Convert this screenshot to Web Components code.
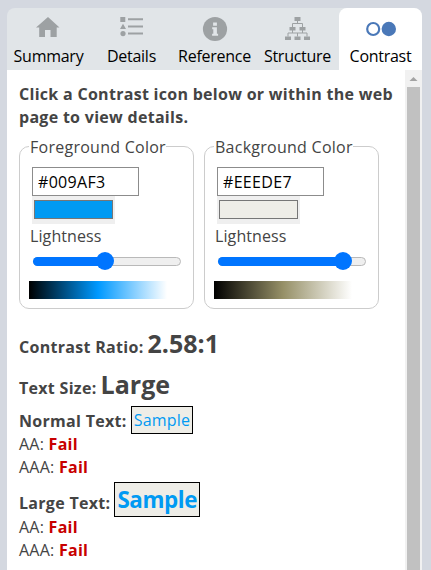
<!DOCTYPE html>
<html lang="en"><head><meta charset="utf-8"><title>Contrast</title>
<style>
html,body{margin:0;height:100%;overflow:hidden;background:#d4d8e0}
body{font:16px/23px "Open Sans","Noto Sans",sans-serif;color:#444}
</style></head><body>
<contrast-sidebar></contrast-sidebar>
<script>
const define=(name,html,update)=>{
  const t=document.createElement('template');t.innerHTML=html;
  customElements.define(name,class extends HTMLElement{
    constructor(){super();this.attachShadow({mode:'open'}).append(t.content.cloneNode(true));}
    connectedCallback(){if(update)update(this,this.shadowRoot);}
  });
};
define('nav-tab',`<style>
:host{display:flex;flex-direction:column;align-items:center;width:83px;height:62px;box-sizing:border-box;color:#000;letter-spacing:-.27px;line-height:24px;white-space:nowrap}
:host([active]){background:#fff;border-radius:8px 8px 0 0}
.icon{height:36px;width:83px}
</style><div class="icon"><slot name="icon"></slot></div><slot></slot>`);

define('color-group',`<style>
:host{display:block;width:175px}
fieldset{box-sizing:border-box;width:175px;height:173.5px;margin:0;border:1px solid #ccc;border-radius:10px;padding:0 0 0 9px;min-width:0}
legend{padding:1px 0 0 1px;height:22px;line-height:23px;white-space:nowrap;letter-spacing:.26px}
.hex{box-sizing:border-box;display:block;width:107px;height:29px;margin:9px 0 0 3px;border:1px solid #8c8c8c;padding:0 5px;font:inherit;letter-spacing:.32px;color:#000;background:#fff;border-radius:0;outline:0}
.pick{box-sizing:border-box;width:83px;height:28px;margin-left:3px;padding:4px 2px;background:#efefef}
.swatch{box-sizing:border-box;height:19px;border:1px solid #767676;background:var(--c)}
.label{height:25px;line-height:25px;padding-left:1px;letter-spacing:.1px}
.range{display:grid;width:148px;height:18px;margin:3px 0 0 4px;align-items:center}
.track{grid-area:1/1;box-sizing:border-box;height:9px;border:1px solid #b9b9b9;border-radius:5px;background:#efefef}
.fill{grid-area:1/1;height:9px;width:var(--p);border-radius:5px;background:#0075ff}
.thumb{grid-area:1/1;width:18px;height:18px;border-radius:50%;margin-left:calc(var(--p) - 9px);background:#0075ff}
.ramp{width:138px;height:18px;margin-top:11px;background:linear-gradient(90deg,#000,var(--mid),#fff)}
</style><fieldset><legend></legend><input class="hex" type="text" spellcheck="false" aria-label="Hex color">
<div class="pick"><div class="swatch"></div></div><div class="label">Lightness</div>
<div class="range"><div class="track"></div><div class="fill"></div><div class="thumb"></div></div>
<div class="ramp"></div></fieldset>`,(h,s)=>{
  s.querySelector('legend').textContent=h.getAttribute('label');
  s.querySelector('input').value=h.getAttribute('color');
  h.style.setProperty('--c',h.getAttribute('color'));
  h.style.setProperty('--p',h.getAttribute('position')+'px');
  h.style.setProperty('--mid',h.getAttribute('mid'));
});
define('result-line',`<style>
:host{display:block;height:23px;line-height:23px;letter-spacing:.25px}b{color:#c80000}
</style><slot></slot> <b>Fail</b>`);
define('text-sample',`<style>
:host{display:inline-block;box-sizing:border-box;border:1px solid #000;background:#eeede7;color:#009af3;padding:2px;font-weight:400;height:28px;line-height:22px;letter-spacing:.2px}
:host([large]){font-size:22.4px;font-weight:700;height:35px;line-height:29px;letter-spacing:-.4px}
</style><slot></slot>`);
define('scroll-rail',`<style>
:host{display:flex;flex-direction:column;width:17px;background:#f1f1f1}
svg{display:block;flex:none}.thumb{flex:1;margin:0 2px;background:#c1c1c1}
</style><svg width="17" height="17"><path d="M8.5 7 12.5 11H4.5Z" fill="#a3a3a3"/></svg><div class="thumb"></div>`);

define('contrast-sidebar',`<style>
:host{display:flex;flex-direction:column;box-sizing:border-box;height:100vh;padding:8px 9px 0 7px}
nav{display:flex;flex:none;width:415px;background:#e1e5e8;border-radius:8px 8px 0 0}
nav svg{display:block;width:83px;height:36px;fill:#9da1a3}
.body{display:flex;flex:1;min-height:0;background:#fff}
main{flex:1;min-width:0;padding:13px 0 0 12px;overflow:hidden;white-space:nowrap}
.intro{font-weight:700;height:46px;letter-spacing:.29px}
.groups{display:flex;gap:10px;margin-top:6px}
.row{font-weight:700;letter-spacing:.3px;display:flex;align-items:baseline;gap:4px}
.row strong{font-size:25px;font-weight:700;line-height:34px;letter-spacing:0}
.row span{transform:translateY(1px)}
.ratio{height:34px;margin-top:17px}.size{height:34px;margin-top:7px}
.normal{height:28px;margin-top:5px}.large{height:35px;margin-top:3px}
.normal+result-line{margin-top:-1px}.large+result-line{margin-top:-1px}
</style>
<nav>
<nav-tab><svg slot="icon" viewBox="0 0 83 36"><path d="M41 9 52.5 19.5H49.7V29H43.5V22H38V29H32.2V19.5H29Z"/></svg>Summary</nav-tab>
<nav-tab><svg slot="icon" viewBox="0 0 83 36"><path d="M30.3 9h5v5h-5zM33 15.8 36 21h-6zM38 10.3h15v2H38zM38 17.5h15v2H38zM38 24.6h15v2H38z"/><circle cx="33" cy="25.6" r="2.6"/></svg>Details</nav-tab>
<nav-tab><svg slot="icon" viewBox="0 0 83 36"><circle cx="42" cy="21" r="12.1"/><path fill="#e1e5e8" d="M40.1 14.5h3.8v3.3h-3.8zM39.2 19.2h4.7v6.5h1.2v2h-6v-2h1.2v-4.4h-1.1z"/></svg>Reference</nav-tab>
<nav-tab><svg slot="icon" viewBox="0 0 83 36"><path d="M38.5 9h6v4h-6zM33.5 19h6v3.5h-6zM43.5 19h6v3.5h-6zM29 28.5h6V32h-6zM38.5 28.5h6V32h-6zM48 28.5h6V32h-6z"/><path fill="none" stroke="#9da1a3" d="M41.5 13v3M36.5 19v-3.5h10V19M36.5 22v3M46.5 22v3M32 28.5V25h19v3.5M41.5 25v3.5"/></svg>Structure</nav-tab>
<nav-tab active><svg slot="icon" viewBox="0 0 83 36"><circle cx="34.2" cy="21" r="6" fill="none" stroke="#4a78b8" stroke-width="2.2"/><circle cx="49.8" cy="21" r="7.2" fill="#4a78b8"/></svg>Contrast</nav-tab>
</nav>
<div class="body"><main>
<div class="intro">Click a Contrast icon below or within the web<br>page to view details.</div>
<div class="groups"><color-group label="Foreground Color" color="#009AF3" position="71.5" mid="#0099ff"></color-group><color-group label="Background Color" color="#EEEDE7" position="124.5" mid="#969067"></color-group></div>
<div class="row ratio">Contrast Ratio: <strong>2.58:1</strong></div>
<div class="row size">Text Size: <strong>Large</strong></div>
<div class="row normal"><span>Normal Text:</span><text-sample>Sample</text-sample></div>
<result-line>AA:</result-line><result-line>AAA:</result-line>
<div class="row large"><span>Large Text:</span><text-sample large>Sample</text-sample></div>
<result-line>AA:</result-line><result-line>AAA:</result-line>
</main><scroll-rail></scroll-rail></div>`);
</script></body></html>
